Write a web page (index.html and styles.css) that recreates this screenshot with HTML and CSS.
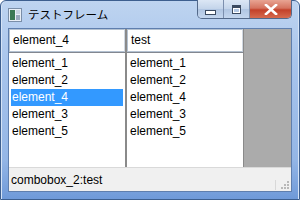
FILE: index.html
```html
<!DOCTYPE html>
<html>
<head>
<meta charset="utf-8">
<link rel="stylesheet" href="styles.css">
</head>
<body>
<div class="window">
  <div class="titlebar">
    <svg class="appicon" width="14" height="14" viewBox="0 0 14 14">
      <rect x="0.5" y="0.5" width="13" height="13" fill="#e8eef6" stroke="#7a8ea8"/>
      <rect x="2" y="2" width="5" height="10" fill="#3d7a55"/>
      <rect x="8" y="2" width="4" height="4" fill="#c9d4e2"/>
      <rect x="8" y="7" width="4" height="5" fill="#9aa9bd"/>
    </svg>
    <span class="title">テストフレーム</span>
    <div class="buttons">
      <div class="btn min"><span class="min-glyph"></span></div>
      <div class="btn max"><span class="max-glyph"></span></div>
      <div class="btn close">
        <svg width="14" height="11" viewBox="0 0 14 11"><path d="M2 1 L12 10 M12 1 L2 10" stroke="#fff" stroke-width="2.6" stroke-linecap="square"/></svg>
      </div>
    </div>
  </div>
  <div class="client">
    <div class="main">
      <div class="col col1">
        <div class="combo">element_4</div>
        <div class="list">
          <div class="item">element_1</div>
          <div class="item">element_2</div>
          <div class="item sel">element_4</div>
          <div class="item">element_3</div>
          <div class="item">element_5</div>
        </div>
      </div>
      <div class="col col2">
        <div class="combo">test</div>
        <div class="list">
          <div class="item">element_1</div>
          <div class="item">element_2</div>
          <div class="item">element_4</div>
          <div class="item">element_3</div>
          <div class="item">element_5</div>
        </div>
      </div>
      <div class="filler"></div>
    </div>
    <div class="status">
      <span class="status-text">combobox_2:test</span>
      <svg class="grip" width="10" height="10" viewBox="0 0 10 10">
        <g fill="#b8b8b8">
          <rect x="7" y="1" width="2" height="2"/>
          <rect x="4" y="4" width="2" height="2"/>
          <rect x="7" y="4" width="2" height="2"/>
          <rect x="1" y="7" width="2" height="2"/>
          <rect x="4" y="7" width="2" height="2"/>
          <rect x="7" y="7" width="2" height="2"/>
        </g>
      </svg>
    </div>
  </div>
</div>
</body>
</html>
```
FILE: styles.css
```css
html, body {
  margin: 0;
  padding: 0;
  width: 300px;
  height: 200px;
  overflow: hidden;
  background: #ffffff;
}
.window {
  width: 300px;
  height: 200px;
  box-sizing: border-box;
  display: flex;
  flex-direction: column;
  background: linear-gradient(180deg, #bed4f0 0%, #a9c5ec 30%, #94b6e6 80%, #6f9ad9 100%);
  border: 1px solid #3d5f8f;
  border-radius: 6px 6px 0 0;
  padding: 0 7px 7px 7px;
  box-shadow: inset 1px 0 0 #d6e4f6, inset -1px 0 0 #d6e4f6;
  font-family: "Liberation Sans", Arial, sans-serif;
}
.titlebar {
  height: 27px;
  display: flex;
  align-items: flex-start;
  position: relative;
}
.appicon {
  margin-top: 7px;
  margin-left: 0;
}
.title {
  margin-left: 6px;
  margin-top: 5px;
  font-family: "Noto Sans CJK JP", sans-serif;
  font-size: 11.5px;
  line-height: 16px;
  color: #000;
}
.buttons {
  position: absolute;
  right: 0;
  top: -1px;
  display: flex;
  border: 1px solid #53698a;
  border-top: none;
  border-radius: 0 0 5px 5px;
  overflow: hidden;
  height: 18px;
}
.btn {
  display: flex;
  align-items: center;
  justify-content: center;
  height: 18px;
}
.btn.min, .btn.max {
  width: 25px;
  background: linear-gradient(180deg, #dce7f5 0%, #c3d4ea 50%, #b0c5e2 51%, #c4d6ee 100%);
  border-right: 1px solid #7c8fae;
}
.min-glyph {
  width: 9px;
  height: 3px;
  background: #fff;
  border: 1px solid #3b4a60;
  margin-top: 6px;
}
.max-glyph {
  width: 7px;
  height: 5px;
  border: 1px solid #3b4a60;
  border-top-width: 3px;
  background: transparent;
  box-shadow: 0 0 0 1px #fff inset;
}
.btn.close {
  width: 41px;
  background: linear-gradient(180deg, #e8a493 0%, #d5735f 45%, #c3412a 55%, #d66b4f 100%);
}
.client {
  flex: 1;
  display: flex;
  flex-direction: column;
  background: #f0f0f0;
  border: 1px solid #5f7fae;
}
.main {
  flex: 1;
  display: flex;
  background: #ababab;
}
.col {
  display: flex;
  flex-direction: column;
  width: 116px;
  background: #ffffff;
}
.col1 {
  border-right: 2px solid #8a8a8a;
}
.col2 {
  width: 116px;
  border-right: 1px solid #8a8a8a;
}
.combo {
  height: 23px;
  box-sizing: border-box;
  border: 1px solid #b4c2d2;
  border-right-color: #d0d8e2;
  background: #fff;
  font-size: 12px;
  line-height: 21px;
  padding-left: 3px;
  color: #000;
}
.list {
  flex: 1;
  border-top: 1px solid #828790;
  padding: 2px 2px 0 2px;
  background: #fff;
}
.item {
  height: 17px;
  line-height: 17px;
  font-size: 12px;
  padding-left: 1px;
  color: #000;
}
.item.sel {
  background: #3399ff;
  color: #fff;
}
.filler {
  flex: 1;
}
.status {
  height: 23px;
  display: flex;
  align-items: center;
  justify-content: space-between;
  border-top: 1px solid #d9d9d9;
  background: #f0f0f0;
}
.status-text {
  font-size: 12px;
  padding-left: 2px;
  color: #000;
}
.grip {
  margin-right: 1px;
  margin-top: 10px;
  border-left: 1px solid #d8d8d8;
  padding-left: 4px;
  height: 10px;
}
```
